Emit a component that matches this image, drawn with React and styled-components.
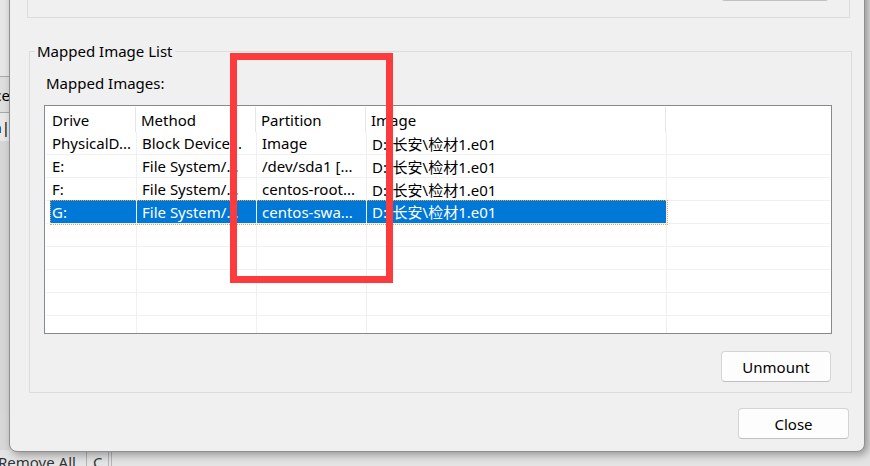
import React from 'react';
import styled, { createGlobalStyle } from 'styled-components';

const GlobalStyle = createGlobalStyle`
  html, body {
    margin: 0;
    padding: 0;
    background: #e2e2e2;
  }
  body {
    font-family: "Noto Sans", "Noto Sans CJK SC", sans-serif;
    font-size: 15px;
    color: #000;
  }
  * { box-sizing: border-box; }
`;

const Desktop = styled.div`
  position: relative;
  width: 870px;
  height: 466px;
  overflow: hidden;
  background: #e2e2e2;
`;

/* the application window behind the dialog */
const BackWindow = styled.div`
  display: flex;
  flex-direction: column;
  height: 100%;
`;

const BackBody = styled.div`
  flex: 1;
  display: flex;
`;

const BackSide = styled.div`
  width: 12px;
  display: flex;
  flex-direction: column;
  background: #d7d7d7;
`;

const BackBlock = styled.div`
  height: ${p => p.h}px;
  background: ${p => p.bg || 'transparent'};
  border-bottom: ${p => (p.line ? '1px solid #a9a9a9' : 'none')};
  display: flex;
  align-items: center;
  justify-content: flex-end;
  overflow: hidden;
  white-space: nowrap;
  padding-right: 2px;
`;

const BackBar = styled.div`
  height: 16px;
  display: flex;
  align-items: flex-start;
  background: #e4e4e4;
  color: #333;
  line-height: 18px;
`;

const BarItem = styled.div`
  padding-top: 3px;
  margin-left: ${p => p.ml || 0}px;
  padding-right: ${p => p.pr || 0}px;
  border-right: ${p => (p.sep ? '1px solid #b4b4b4' : 'none')};
  height: 30px;
  white-space: nowrap;
`;

/* dialog */
const Dialog = styled.div`
  position: absolute;
  left: 9px;
  top: -40px;
  width: 856px;
  height: 492px;
  background: #f0f0f0;
  border: 1px solid #8f8f8f;
  border-radius: 0 0 8px 8px;
  box-shadow: 3px 3px 8px rgba(0, 0, 0, 0.35);
  display: flex;
  flex-direction: column;
`;

const TopGroup = styled.div`
  margin: 9px 0 0 17px;
  width: 823px;
  height: 48px;
  border: 1px solid #dcdcdc;
  display: flex;
  justify-content: flex-end;
  align-items: flex-end;
  padding: 0 20px 16px 0;
`;

const Group = styled.fieldset`
  margin: 24px 0 0 19px;
  width: 823px;
  height: 351px;
  border: 1px solid #dcdcdc;
  padding: 14px 19px 10px 14px;
  display: flex;
  flex-direction: column;
  min-width: 0;
`;

const Legend = styled.legend`
  margin-left: -9px;
  padding: 0 2px;
  line-height: 18px;
`;

const Label = styled.div`
  padding-left: 2px;
  line-height: 18px;
  margin-bottom: 13px;
`;

const ListView = styled.div`
  height: 229px;
  background: #fff;
  border: 1px solid #858990;
  padding: 0 1px;
  overflow: hidden;
`;

const cols = '4px 86px 120px 110px 300px 1fr';

const HeaderRow = styled.div`
  display: grid;
  grid-template-columns: ${cols};
  height: 26px;
`;

const HeaderCell = styled.div`
  padding-left: ${p => p.pl}px;
  display: flex;
  align-items: center;
  border-right: 1px solid #e5e5e5;
  white-space: nowrap;
  overflow: hidden;
  margin-top: 1px;
`;

const Row = styled.div`
  position: relative;
  display: grid;
  grid-template-columns: ${cols};
  height: 23px;
  border-bottom: 1px solid #f0f0f0;
  color: ${p => (p.selected ? '#fff' : '#000')};

  ${p =>
    p.selected &&
    `
    &::after {
      content: '';
      position: absolute;
      left: 4px;
      top: -1px;
      width: 616px;
      height: 23px;
      border: 1px dotted #e7a44f;
      pointer-events: none;
    }
  `}
`;

const Cell = styled.div`
  padding-left: ${p => p.pl}px;
  display: flex;
  align-items: center;
  white-space: nowrap;
  overflow: hidden;
  border-left: ${p => (p.first ? 'none' : '1px solid #f0f0f0')};
  background: ${p => (p.selected ? '#0078d7' : 'transparent')};
  margin-top: ${p => (p.selected ? '-1px' : '0')};
`;

const Spacer = styled.div``;

const ButtonRow = styled.div`
  display: flex;
  justify-content: flex-end;
  padding-right: ${p => p.pr}px;
  margin-top: ${p => p.mt}px;
`;

const Button = styled.button`
  width: ${p => p.w || 110}px;
  height: 31px;
  font-family: inherit;
  font-size: 15px;
  color: #000;
  background: #fdfdfd;
  border: 1px solid #d4d4d4;
  border-bottom-color: #c0c0c0;
  border-radius: 4px;
  padding: 0;
`;

const Annotation = styled.div`
  position: absolute;
  left: 230px;
  top: 53px;
  width: 163px;
  height: 230px;
  border: 7px solid #fd3a3c;
  pointer-events: none;
`;

const rows = [
  ['PhysicalD...', 'Block Device...', 'Image', 'D:\\长安\\检材1.e01'],
  ['E:', 'File System/...', '/dev/sda1 [...', 'D:\\长安\\检材1.e01'],
  ['F:', 'File System/...', 'centos-root...', 'D:\\长安\\检材1.e01'],
  ['G:', 'File System/...', 'centos-swa...', 'D:\\长安\\检材1.e01'],
];

const selectedIndex = 3;
const emptyRows = 5;

const App = () => {
  return (
    <Desktop>
      <GlobalStyle />
      <BackWindow>
        <BackBody>
          <BackSide>
            <BackBlock h={77} bg="#e6e6e6" line />
            <BackBlock h={36} bg="#dedede" line>ce</BackBlock>
            <BackBlock h={28} bg="#e8e8e8">n|</BackBlock>
            <BackBlock h={270} bg="#d6d6d6" />
          </BackSide>
        </BackBody>
        <BackBar>
          <BarItem ml={-2} pr={10} sep>Remove All</BarItem>
          <BarItem ml={6} pr={6}>C</BarItem>
          <BarItem sep pr={0} />
          <BarItem ml={2} sep />
        </BackBar>
      </BackWindow>

      <Dialog>
        <TopGroup>
          <Button w={108} />
        </TopGroup>

        <Group>
          <Legend>Mapped Image List</Legend>
          <Label>Mapped Images:</Label>
          <ListView>
            <HeaderRow>
              <Spacer />
              <HeaderCell pl={2}>Drive</HeaderCell>
              <HeaderCell pl={5}>Method</HeaderCell>
              <HeaderCell pl={5}>Partition</HeaderCell>
              <HeaderCell pl={5}>Image</HeaderCell>
              <Spacer />
            </HeaderRow>
            {rows.map((r, i) => {
              const sel = i === selectedIndex;
              return (
                <Row key={i} selected={sel}>
                  <Spacer />
                  <Cell first pl={2} selected={sel}>{r[0]}</Cell>
                  <Cell pl={5} selected={sel}>{r[1]}</Cell>
                  <Cell pl={5} selected={sel}>{r[2]}</Cell>
                  <Cell pl={5} selected={sel}>{r[3]}</Cell>
                  <Cell />
                </Row>
              );
            })}
            {Array.from({ length: emptyRows }).map((_, i) => (
              <Row key={'e' + i}>
                <Spacer />
                <Cell first />
                <Cell />
                <Cell />
                <Cell />
                <Cell />
              </Row>
            ))}
          </ListView>
          <ButtonRow pr={1} mt={17}>
            <Button>Unmount</Button>
          </ButtonRow>
        </Group>

        <ButtonRow pr={15} mt={15}>
          <Button w={111}>Close</Button>
        </ButtonRow>
      </Dialog>

      <Annotation />
    </Desktop>
  );
};

export default App;
